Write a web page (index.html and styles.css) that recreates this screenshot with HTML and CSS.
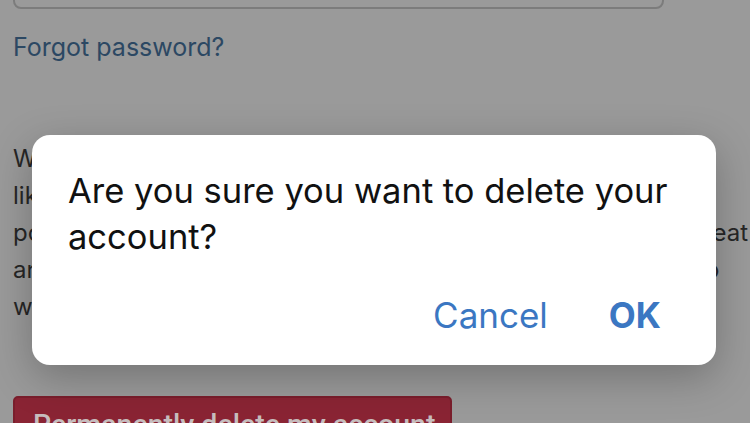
FILE: index.html
```html
<!DOCTYPE html>
<html lang="en">
<head>
  <meta charset="UTF-8">
  <meta name="viewport" content="width=device-width, initial-scale=1.0">
  <title>Delete account</title>
  <link rel="stylesheet" href="styles.css">
</head>
<body>
  <div class="page">
    <input type="password" class="field" aria-label="Password">
    <a href="#" class="forgot">Forgot password?</a>

    <div class="notice">
      <div class="line">We're sorry to see you go. Deleting your account removes all</div>
      <div class="line">like your profile, your saved items and your history right away.</div>
      <div class="line">posts and comments you made will also get removed. It's a great</div>
      <div class="line">and simple way to start over, but this can't be undone later (so</div>
      <div class="line">way to bring it back, even if you ask us.</div>
    </div>

    <button class="danger">Permanently delete my account</button>
  </div>

  <div class="dialog">
    <p class="dialog-text">Are you sure you want to delete your account?</p>
    <div class="dialog-actions">
      <button class="dialog-btn">Cancel</button>
      <button class="dialog-btn primary">OK</button>
    </div>
  </div>
</body>
</html>
```

FILE: styles.css
```css
html, body {
  margin: 0;
  height: 100%;
  overflow: hidden;
  background-color: #9a9a9a;
}
body {
  font-family: Inter, "Liberation Sans", sans-serif;
}
.page {
  margin-top: -41px;
  padding: 0 13px;
}
.field {
  display: block;
  box-sizing: border-box;
  width: 651px;
  height: 50px;
  border: 2px solid #7c7c7c;
  border-radius: 8px;
  background-color: #9a9a9a;
}
.forgot {
  display: block;
  margin-top: 23px;
  font-size: 25px;
  line-height: 30px;
  color: #2c4863;
  text-decoration: none;
}
.notice {
  margin-top: 78px;
  width: 800px;
  font-size: 24px;
  line-height: 37px;
  color: #262626;
}
.line {
  white-space: nowrap;
}
.danger {
  display: block;
  margin-top: 71px;
  box-sizing: border-box;
  width: 439px;
  height: 50px;
  padding: 7px 10px 0 18px;
  text-align: left;
  white-space: nowrap;
  font-family: Roboto, "Liberation Sans", sans-serif;
  font-weight: 500;
  font-size: 28.5px;
  color: #c7bdbe;
  background-color: #8a2434;
  border: 2px solid #7a1e2c;
  border-radius: 5px;
}
.dialog {
  position: absolute;
  left: 32px;
  top: 135px;
  width: 684px;
  height: 230px;
  box-sizing: border-box;
  padding: 33px 30px 0 36px;
  background-color: #fff;
  border-radius: 18px;
  box-shadow: 0 12px 40px rgba(0, 0, 0, 0.25);
}
.dialog-text {
  margin: 0;
  font-size: 34.5px;
  line-height: 46px;
  color: #111;
}
.dialog-actions {
  display: flex;
  justify-content: flex-end;
  gap: 61px;
  margin: 33px 25px 0 0;
}
.dialog-btn {
  padding: 0;
  border: none;
  background: none;
  font-family: Inter, "Liberation Sans", sans-serif;
  font-size: 35px;
  line-height: 44px;
  color: #3b77c2;
}
.dialog-btn.primary {
  font-weight: 700;
}
```
